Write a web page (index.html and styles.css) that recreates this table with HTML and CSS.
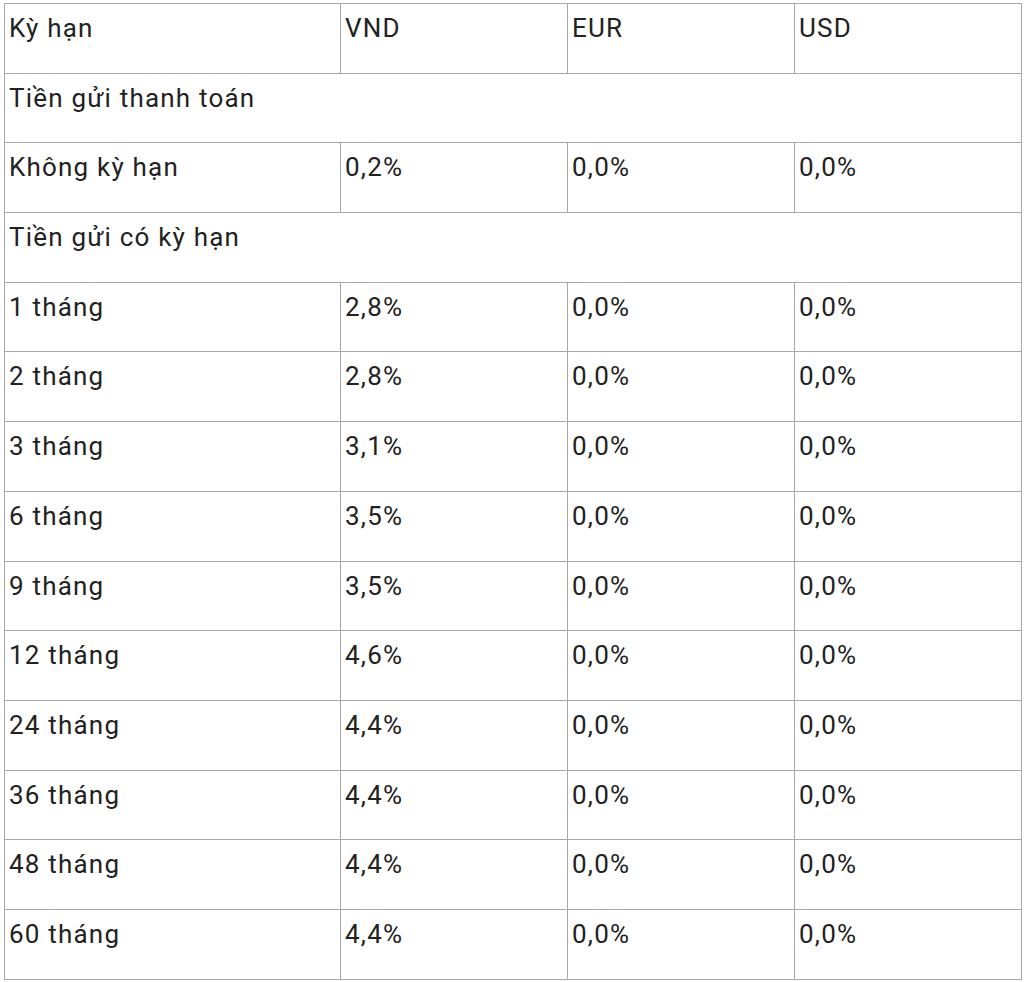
FILE: index.html
```html
<!DOCTYPE html>
<html lang="vi">
<head>
<meta charset="utf-8">
<title>Lãi suất</title>
<link rel="stylesheet" href="styles.css">
</head>
<body>
<table class="rates">
  <colgroup>
    <col class="c-term">
    <col class="c-cur">
    <col class="c-cur">
    <col class="c-cur">
  </colgroup>
  <tbody>
    <tr><td>Kỳ hạn</td><td>VND</td><td>EUR</td><td>USD</td></tr>
    <tr><td colspan="4">Tiền gửi thanh toán</td></tr>
    <tr><td>Không kỳ hạn</td><td>0,2%</td><td>0,0%</td><td>0,0%</td></tr>
    <tr><td colspan="4">Tiền gửi có kỳ hạn</td></tr>
    <tr><td>1 tháng</td><td>2,8%</td><td>0,0%</td><td>0,0%</td></tr>
    <tr><td>2 tháng</td><td>2,8%</td><td>0,0%</td><td>0,0%</td></tr>
    <tr><td>3 tháng</td><td>3,1%</td><td>0,0%</td><td>0,0%</td></tr>
    <tr><td>6 tháng</td><td>3,5%</td><td>0,0%</td><td>0,0%</td></tr>
    <tr><td>9 tháng</td><td>3,5%</td><td>0,0%</td><td>0,0%</td></tr>
    <tr><td>12 tháng</td><td>4,6%</td><td>0,0%</td><td>0,0%</td></tr>
    <tr><td>24 tháng</td><td>4,4%</td><td>0,0%</td><td>0,0%</td></tr>
    <tr><td>36 tháng</td><td>4,4%</td><td>0,0%</td><td>0,0%</td></tr>
    <tr><td>48 tháng</td><td>4,4%</td><td>0,0%</td><td>0,0%</td></tr>
    <tr><td>60 tháng</td><td>4,4%</td><td>0,0%</td><td>0,0%</td></tr>
  </tbody>
</table>
</body>
</html>
```
FILE: styles.css
```css
html, body {
  margin: 0;
  padding: 0;
  background: #ffffff;
}
body {
  padding: 3px 0 0 4px;
  font-family: Roboto, "Liberation Sans", Arial, sans-serif;
  color: #222222;
}
.rates {
  border-collapse: collapse;
  table-layout: fixed;
  width: 1018px;
  font-size: 26px;
  line-height: 30px;
  letter-spacing: 1.2px;
}
.c-term { width: 336px; }
.c-cur { width: 227px; }
.rates tr {
  height: 69.7px;
}
.rates td {
  border: 1px solid #a8a8a8;
  vertical-align: top;
  padding: 9px 5px 0 4px;
  text-align: left;
  font-weight: 400;
}
```
